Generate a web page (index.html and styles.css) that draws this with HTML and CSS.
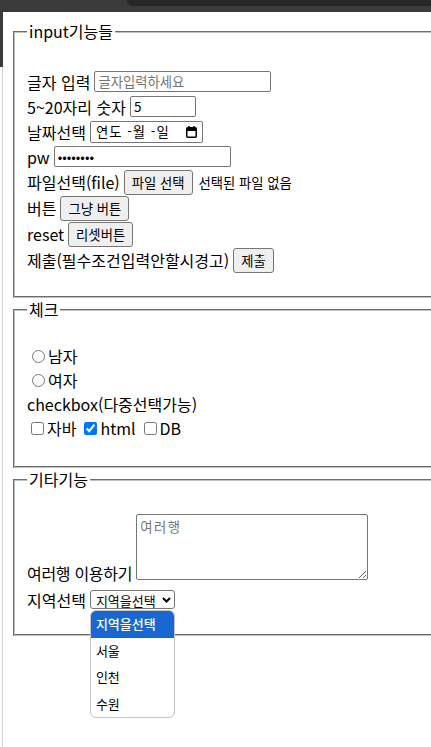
FILE: index.html
```html
<!DOCTYPE html>
<html lang="ko">
<head>
    <meta charset="UTF-8">
    <meta name="viewport" content="width=device-width, initial-scale=1.0">
    <title>input 기능 연습</title>
    <link rel="stylesheet" href="styles.css">
</head>
<body>

    <div class="topbar">
        <div class="topbar-tab"></div>
    </div>

    <div class="window">
        <div class="side-edge">
            <div class="side-dark"></div>
        </div>

        <div class="page">
            <!-- input 기능들 -->
            <fieldset class="group">
                <legend>input기능들</legend>
                <div class="rows rows-input">
                    <div class="row">글자 입력 <input type="text" class="field field-text" placeholder="글자입력하세요"></div>
                    <div class="row">5~20자리 숫자 <input type="number" class="field field-number" min="5" max="20" value="5"></div>
                    <div class="row">날짜선택
                        <span class="field field-date">
                            <span class="date-text">연도 -월 -일</span>
                            <svg class="date-icon" width="11" height="12" viewBox="0 0 11 12">
                                <rect x="0.75" y="1.75" width="9.5" height="9.5" rx="1" fill="none" stroke="#000" stroke-width="1.5"/>
                                <rect x="1" y="2" width="9" height="3" fill="#000"/>
                                <path d="M3 0v2M8 0v2" stroke="#000" stroke-width="1.5"/>
                            </svg>
                        </span>
                    </div>
                    <div class="row">pw <input type="password" class="field field-text" value="12345678"></div>
                    <div class="row row-btn">파일선택(file)
                        <span class="file-pick">
                            <button type="button" class="btn">파일 선택</button>
                            <span class="file-name">선택된 파일 없음</span>
                        </span>
                    </div>
                    <div class="row row-btn">버튼 <button type="button" class="btn">그냥 버튼</button></div>
                    <div class="row row-btn">reset <button type="reset" class="btn">리셋버튼</button></div>
                    <div class="row row-btn">제출(필수조건입력안할시경고) <button type="submit" class="btn">제출</button></div>
                </div>
            </fieldset>

            <!-- 체크 -->
            <fieldset class="group">
                <legend>체크</legend>
                <div class="rows rows-check">
                    <div class="row row-check"><label class="opt"><input type="radio" name="gender">남자</label></div>
                    <div class="row row-check"><label class="opt"><input type="radio" name="gender">여자</label></div>
                    <div class="row row-check">checkbox(다중선택가능)</div>
                    <div class="row row-check">
                        <label class="opt opt-box"><input type="checkbox">자바</label>
                        <label class="opt opt-box"><input type="checkbox" checked>html</label>
                        <label class="opt opt-box"><input type="checkbox">DB</label>
                    </div>
                </div>
            </fieldset>

            <!-- 기타기능 -->
            <fieldset class="group group-etc">
                <legend>기타기능</legend>
                <div class="rows rows-etc">
                    <div class="row row-area">
                        <span class="area-label">여러행 이용하기</span>
                        <textarea class="area" placeholder="여러행"></textarea>
                    </div>
                    <div class="row row-select">지역선택
                        <span class="select-wrap">
                            <select class="select">
                                <option>지역을선택</option>
                                <option>서울</option>
                                <option>인천</option>
                                <option>수원</option>
                            </select>
                            <svg class="select-arrow" width="9" height="6" viewBox="0 0 9 6">
                                <path d="M1 1l3.5 3.5L8 1" fill="none" stroke="#000" stroke-width="2"/>
                            </svg>
                            <ul class="select-list">
                                <li class="is-active">지역을선택</li>
                                <li>서울</li>
                                <li>인천</li>
                                <li>수원</li>
                            </ul>
                        </span>
                    </div>
                </div>
            </fieldset>
        </div>
    </div>

</body>
</html>
```

FILE: styles.css
```css
:root {
    --frame: #3b3b3b;
    --frame-dark: #272727;
    --line: #767676;
    --btn: #efefef;
    --pick: #1967d2;
}

* {
    box-sizing: border-box;
}

html,
body {
    margin: 0;
    height: 100%;
}

body {
    font-family: "Noto Sans CJK KR", "Malgun Gothic", sans-serif;
    font-size: 16px;
    font-feature-settings: "palt";
    color: #000;
    background: #fff;
    overflow: hidden;
}

/* 브라우저 틀 */
.topbar {
    height: 12px;
    background: var(--frame);
}

.topbar-tab {
    height: 6px;
    margin-left: 127px;
    background: var(--frame-dark);
    border-bottom-left-radius: 6px;
}

.window {
    display: flex;
    height: calc(100% - 12px);
}

.side-edge {
    flex: none;
    width: 3px;
    background: linear-gradient(to right, #fff 2px, #cfcfcf 2px);
}

.side-dark {
    height: 55px;
    background: var(--frame);
}

.page {
    flex: none;
    width: 560px;
    padding: 8px;
}

/* fieldset */
.group {
    margin: 0 2px;
    padding: 0 12px 23px;
    border: 2px groove #c0c0c0;
    min-width: 0;
}

.group legend {
    padding: 0 2px;
    line-height: 23px;
}

.group-etc {
    padding-bottom: 25px;
}

.rows-input {
    padding-top: 26px;
}

.rows-check {
    padding-top: 23px;
    padding-bottom: 3px;
}

.rows-etc {
    padding-top: 23px;
}

.row {
    display: flex;
    align-items: center;
    gap: 4px;
    height: 25px;
    white-space: nowrap;
}

.row-btn {
    height: 26px;
}

.row-check {
    height: 24px;
}

/* 입력칸 */
.field {
    font-family: inherit;
    font-size: 13.33px;
    height: 21px;
    padding: 0 3px;
    border: 1px solid var(--line);
    border-radius: 2px;
    background: #fff;
    color: #000;
}

.field::placeholder {
    color: #757575;
}

.field-text {
    width: 177px;
}

.field-number {
    width: 66px;
}

.field-number::-webkit-inner-spin-button,
.field-number::-webkit-outer-spin-button {
    -webkit-appearance: none;
    margin: 0;
}

.field-date {
    display: inline-flex;
    align-items: center;
    justify-content: space-between;
    width: 113px;
    height: 22px;
    padding: 0 5px 0 5px;
}

.date-text {
    font-feature-settings: normal;
    letter-spacing: 1px;
}

.btn {
    font-family: inherit;
    font-size: 13.33px;
    height: 25px;
    padding: 0 7px;
    border: 1px solid var(--line);
    border-radius: 3px;
    background: var(--btn);
    color: #000;
}

.file-pick {
    display: inline-flex;
    align-items: center;
    gap: 6px;
}

.file-name {
    font-size: 13.33px;
}

/* 체크 */
.opt {
    display: inline-flex;
    align-items: center;
}

.opt input {
    width: 13px;
    height: 13px;
    margin: 0 3px 0 5px;
}

.opt-box input {
    margin-left: 4px;
}

/* 기타 */
.row-area {
    align-items: flex-end;
    height: 66px;
}

.area-label {
    line-height: 14px;
    letter-spacing: -0.3px;
}

.area {
    width: 232px;
    height: 66px;
    margin: 0;
    padding: 2px 3px;
    font-family: inherit;
    font-size: 13.33px;
    font-feature-settings: normal;
    letter-spacing: 1.5px;
    border: 1px solid var(--line);
    border-radius: 2px;
    resize: both;
}

.area::placeholder {
    color: #757575;
}

.row-select {
    height: 19px;
    margin-top: 10px;
}

.select-wrap {
    position: relative;
    display: inline-flex;
}

.select {
    -webkit-appearance: none;
    appearance: none;
    width: 85px;
    height: 19px;
    padding: 0 0 0 5px;
    font-family: inherit;
    font-size: 13px;
    color: #000;
    background: #fff;
    border: 1px solid var(--line);
    border-radius: 3px;
}

.select-arrow {
    position: absolute;
    top: 7px;
    left: 72px;
    pointer-events: none;
}

.select-list {
    position: absolute;
    top: 20px;
    left: 0;
    z-index: 5;
    width: 85px;
    margin: 0;
    padding: 0;
    list-style: none;
    background: #fff;
    border: 1px solid #c4c4c4;
    border-radius: 6px;
    overflow: hidden;
    font-size: 13px;
}

.select-list li {
    height: 26.5px;
    line-height: 26.5px;
    padding-left: 5px;
}

.select-list .is-active {
    background: var(--pick);
    color: #fff;
    font-weight: 500;
}
```
